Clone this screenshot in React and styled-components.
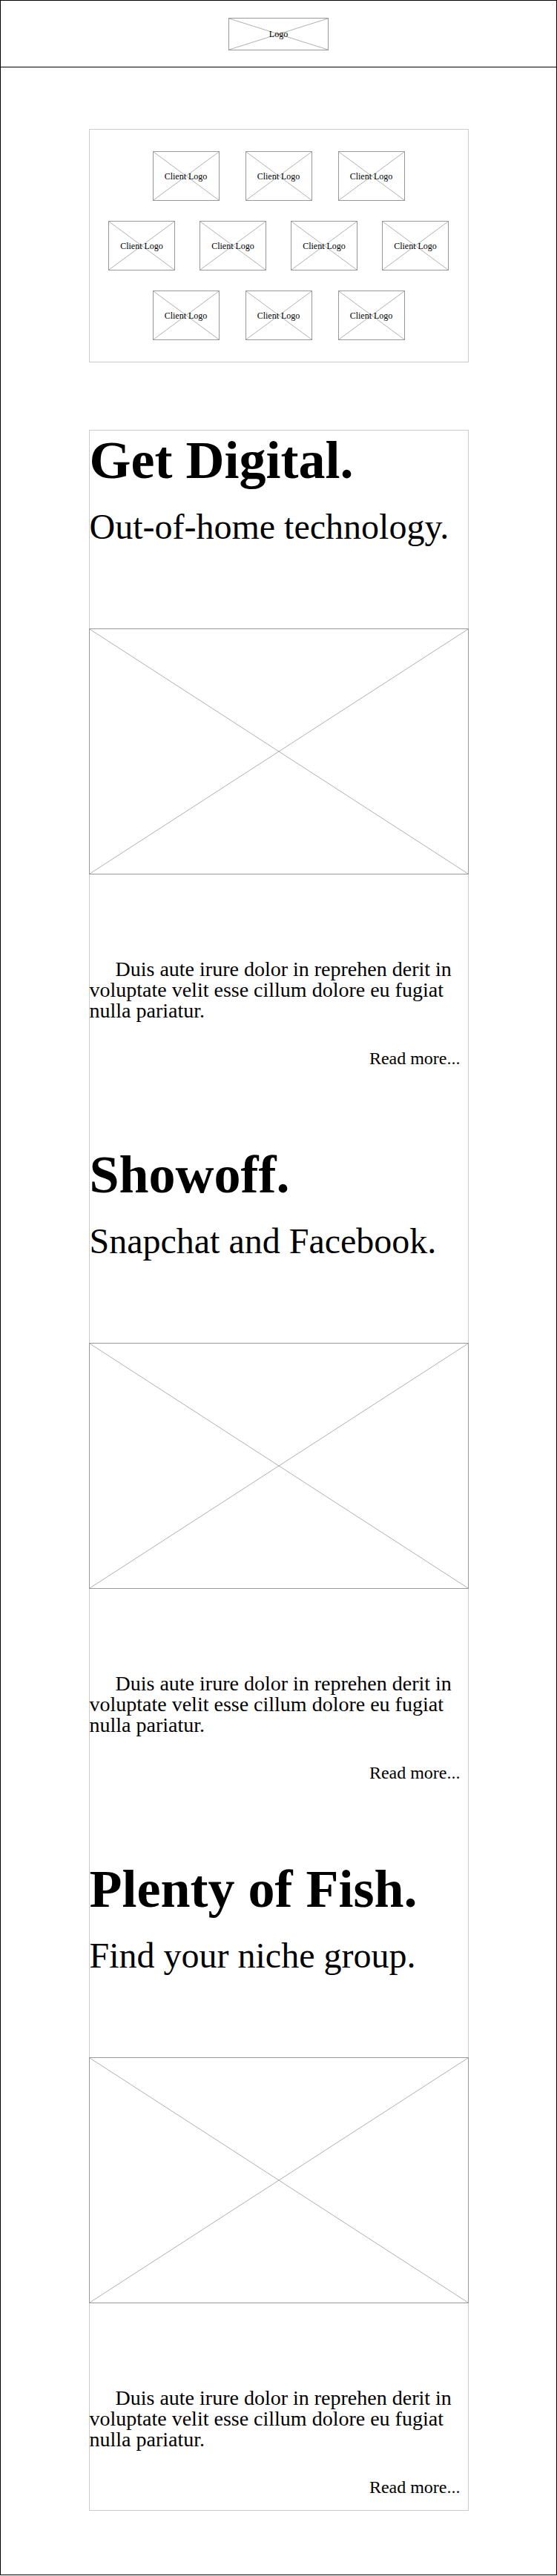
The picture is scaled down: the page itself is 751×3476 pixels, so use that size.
import React from "react";
import styled, { createGlobalStyle } from "styled-components";

const articles = [
	{ title: "Get Digital.", subtitle: "Out-of-home technology." },
	{ title: "Showoff.", subtitle: "Snapchat and Facebook." },
	{ title: "Plenty of Fish.", subtitle: "Find your niche group." },
];

const clientRows = [
	{ count: 3, gap: 35 },
	{ count: 4, gap: 33 },
	{ count: 3, gap: 35 },
];

const bodyText =
	"Duis aute irure dolor in reprehen derit in voluptate velit esse cillum dolore eu fugiat nulla pariatur.";

function Placeholder({ label, className }) {
	return (
		<PlaceholderBox className={className}>
			<CrossLines viewBox="0 0 100 100" preserveAspectRatio="none">
				<line x1="0" y1="0" x2="100" y2="100" vectorEffect="non-scaling-stroke" />
				<line x1="100" y1="0" x2="0" y2="100" vectorEffect="non-scaling-stroke" />
			</CrossLines>
			{label && <PlaceholderLabel>{label}</PlaceholderLabel>}
		</PlaceholderBox>
	);
}

function App() {
	return (
		<>
			<GlobalStyle />
			<Page>
				<Header>
					<SiteLogo label="Logo" />
				</Header>
				<Main>
					<ClientPanel>
						{clientRows.map((row, i) => (
							<LogoRow key={i} $gap={row.gap}>
								{Array.from({ length: row.count }).map((_, j) => (
									<ClientLogo key={j} label="Client Logo" />
								))}
							</LogoRow>
						))}
					</ClientPanel>
					<Card>
						{articles.map((a) => (
							<Article key={a.title}>
								<Title>{a.title}</Title>
								<Subtitle>{a.subtitle}</Subtitle>
								<Photo />
								<Body>{bodyText}</Body>
								<ReadMore>Read more...</ReadMore>
							</Article>
						))}
					</Card>
				</Main>
			</Page>
		</>
	);
}

export default App;

const GlobalStyle = createGlobalStyle`
	html, body {
		margin: 0;
		padding: 0;
		background: #fff;
	}
	body {
		font-family: "Liberation Serif", "Times New Roman", serif;
		color: #000;
	}
`;

const Page = styled.div`
	box-sizing: border-box;
	width: 100%;
	border: 1px solid #000;
	padding-bottom: 86px;
`;

const Header = styled.header`
	display: flex;
	align-items: center;
	justify-content: center;
	height: 89px;
	border-bottom: 1px solid #000;
`;

const PlaceholderBox = styled.div`
	position: relative;
	box-sizing: border-box;
	display: flex;
	align-items: center;
	justify-content: center;
	border: 1px solid #999;
	background: #fff;
`;

const CrossLines = styled.svg`
	position: absolute;
	inset: 0;
	width: 100%;
	height: 100%;
	stroke: #b0b0b0;
	stroke-width: 1;
`;

const PlaceholderLabel = styled.span`
	position: relative;
	font-size: 12px;
	line-height: 14px;
	white-space: nowrap;
`;

const SiteLogo = styled(Placeholder)`
	width: 135px;
	height: 44px;
`;

const Main = styled.main`
	display: flex;
	flex-direction: column;
	align-items: center;
	padding-top: 83px;
`;

const ClientPanel = styled.section`
	box-sizing: border-box;
	width: 512px;
	padding: 29px 0;
	border: 1px solid #ccc;
	display: flex;
	flex-direction: column;
	gap: 27px;
`;

const LogoRow = styled.div`
	display: flex;
	justify-content: center;
	gap: ${(p) => p.$gap}px;
`;

const ClientLogo = styled(Placeholder)`
	width: 90px;
	height: 67px;
`;

const Card = styled.section`
	box-sizing: border-box;
	width: 512px;
	margin-top: 91px;
	border: 1px solid #ccc;
	padding-bottom: 17px;
	display: flex;
	flex-direction: column;
	gap: 103px;
`;

const Article = styled.article`
	display: flex;
	flex-direction: column;
`;

const Title = styled.h1`
	margin: 0;
	font-size: 72px;
	line-height: 81px;
	font-weight: bold;
`;

const Subtitle = styled.h2`
	margin: 21px 0 0;
	font-size: 48px;
	line-height: 55px;
	font-weight: normal;
`;

const Photo = styled(Placeholder)`
	margin: 110px -1px 0;
	width: calc(100% + 2px);
	height: 332px;
`;

const Body = styled.p`
	margin: 114px 0 0;
	font-size: 28px;
	line-height: 28px;
	text-indent: 35px;
`;

const ReadMore = styled.a`
	margin-top: 36px;
	padding-right: 10px;
	align-self: flex-end;
	font-size: 24px;
	line-height: 28px;
	color: #000;
`;
